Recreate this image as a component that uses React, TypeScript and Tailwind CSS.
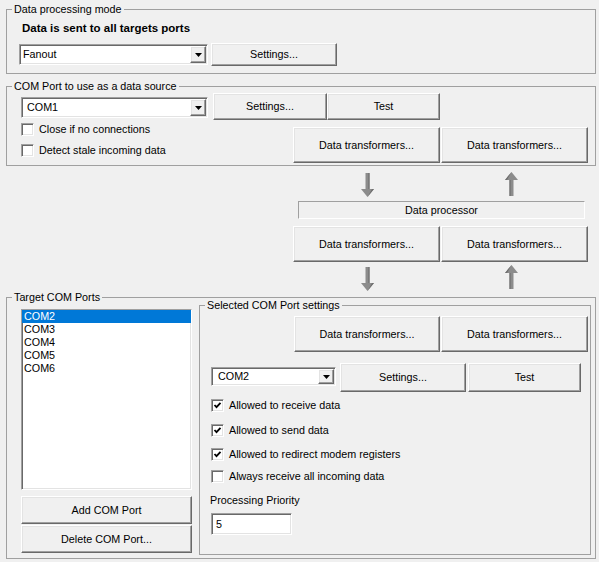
import React from 'react'

// classic win32 bevels
const raised =
  'border border-t-white border-l-white border-b-[#696969] border-r-[#696969] shadow-[inset_-1px_-1px_0_#a0a0a0,inset_1px_1px_0_#e3e3e3] bg-[#f0f0f0]'
const sunken =
  'border border-t-[#a0a0a0] border-l-[#a0a0a0] border-b-white border-r-white shadow-[inset_1px_1px_0_#696969,inset_-1px_-1px_0_#e3e3e3] bg-white'

function Button({ className, children }: { className: string; children: React.ReactNode }) {
  return (
    <div className={`${raised} flex items-center justify-center shrink-0 ${className}`}>
      {children}
    </div>
  )
}

function Combo({ value, className, textPad }: { value: string; className: string; textPad: string }) {
  return (
    <div className={`${sunken} flex items-stretch p-[1px] shrink-0 ${className}`}>
      <div className={`flex-1 flex items-center ${textPad}`}>{value}</div>
      <div className={`${raised} w-[16px] flex items-center justify-center`}>
        <svg width="7" height="4" viewBox="0 0 7 4">
          <polygon points="0,0 7,0 3.5,4" fill="#000" />
        </svg>
      </div>
    </div>
  )
}

function Check({ checked, label, className }: { checked?: boolean; label: string; className?: string }) {
  return (
    <div className={`flex items-center h-[13px] ${className ?? ''}`}>
      <div className={`${sunken} w-[13px] h-[13px] shrink-0 flex items-center justify-center`}>
        {checked && (
          <svg width="9" height="9" viewBox="0 0 9 9">
            <polyline points="1.5,4 3.5,6.2 7.5,1.8" fill="none" stroke="#000" strokeWidth="1.8" />
          </svg>
        )}
      </div>
      <span className="ml-[5px] whitespace-nowrap">{label}</span>
    </div>
  )
}

function Arrow({ up, className }: { up?: boolean; className?: string }) {
  return (
    <svg width="13" height="24" viewBox="0 0 13 24" className={className}>
      <g transform={up ? 'rotate(180 6.5 12)' : undefined}>
        <rect x="4.5" y="0" width="4" height="17" fill="#8c8c8c" />
        <rect x="7.5" y="0" width="1" height="17" fill="#696969" />
        <polygon points="0,16 13,16 6.5,24" fill="#8c8c8c" />
        <polygon points="6.5,24 13,16 11,16" fill="#6f6f6f" />
      </g>
    </svg>
  )
}

function Group({ title, className, children }: { title: string; className: string; children: React.ReactNode }) {
  return (
    <fieldset className={`border border-[#a0a0a0] min-w-0 ${className}`}>
      <legend className="ml-[5px] px-[2px] leading-[13px]">{title}</legend>
      {children}
    </fieldset>
  )
}

const ports = ['COM2', 'COM3', 'COM4', 'COM5', 'COM6']

export default function App() {
  return (
    <div className="w-[599px] h-[562px] overflow-hidden bg-[#f0f0f0] pl-[6px] pt-[3px] font-['Liberation_Sans',Arial,sans-serif] text-[10.75px] leading-[13px] text-black">
      {/* Data processing mode */}
      <Group title="Data processing mode" className="w-[590px] h-[71px]">
        <div className="ml-[15px] mt-[5px] font-bold text-[11.5px] leading-[14px]">
          Data is sent to all targets ports
        </div>
        <div className="flex items-start mt-[8px] ml-[12px]">
          <Combo value="Fanout" className="mt-[1px] w-[189px] h-[21px]" textPad="pl-[2px]" />
          <Button className="ml-[3px] w-[126px] h-[23px]">Settings...</Button>
        </div>
      </Group>

      {/* Source port */}
      <Group title="COM Port to use as a data source" className="mt-[6px] w-[590px] h-[86px]">
        <div className="flex items-start ml-[14px]">
          <Combo value="COM1" className="mt-[4px] w-[187px] h-[21px]" textPad="pl-[4px]" />
          <Button className="ml-[5px] w-[114px] h-[27px]">Settings...</Button>
          <Button className="w-[113px] h-[27px]">Test</Button>
        </div>
        <div className="flex items-start">
          <div className="ml-[14px] w-[272px] pt-[3px] flex flex-col gap-[8px]">
            <Check label="Close if no connections" />
            <Check label="Detect stale incoming data" />
          </div>
          <div className="flex mt-[7px]">
            <Button className="w-[147px] h-[36px]">Data transformers...</Button>
            <Button className="ml-[1px] w-[147px] h-[36px]">Data transformers...</Button>
          </div>
        </div>
      </Group>

      {/* Data flow */}
      <div className="ml-[287px] w-[295px]">
        <div className="flex items-start mt-[6px] h-[25px]">
          <Arrow className="ml-[68px] mt-[1px]" />
          <Arrow up className="ml-[131px]" />
        </div>
        <div className="mt-[4px] ml-[5px] w-[287px] h-[18px] border border-t-[#a0a0a0] border-l-[#a0a0a0] border-b-white border-r-white flex items-center justify-center">
          Data processor
        </div>
        <div className="flex mt-[7px]">
          <Button className="w-[147px] h-[36px]">Data transformers...</Button>
          <Button className="ml-[1px] w-[147px] h-[36px]">Data transformers...</Button>
        </div>
        <div className="flex items-start mt-[3px] h-[26px]">
          <Arrow className="ml-[68px] mt-[2px]" />
          <Arrow up className="ml-[131px]" />
        </div>
      </div>

      {/* Targets */}
      <Group title="Target COM Ports" className="w-[590px] h-[268px]">
        <div className="flex items-start">
          <div className="ml-[14px] w-[171px] mt-[5px] shrink-0">
            <div className={`${sunken} h-[181px]`}>
              {ports.map((p, i) => (
                <div
                  key={p}
                  className={`h-[13px] pl-[2px] flex items-center ${i === 0 ? 'bg-[#0078d7] text-white' : ''}`}
                >
                  {p}
                </div>
              ))}
            </div>
            <Button className="mt-[6px] w-[171px] h-[28px]">Add COM Port</Button>
            <Button className="mt-[1px] w-[171px] h-[28px]">Delete COM Port...</Button>
          </div>

          <Group title="Selected COM Port settings" className="ml-[7px] -mt-[5px] w-[392px] h-[256px] shrink-0">
            <div className="flex mt-[4px] ml-[94px]">
              <Button className="w-[146px] h-[36px]">Data transformers...</Button>
              <Button className="ml-[1px] w-[147px] h-[36px]">Data transformers...</Button>
            </div>
            <div className="flex items-start mt-[11px] ml-[11px]">
              <Combo value="COM2" className="mt-[4px] w-[125px] h-[19px]" textPad="pl-[5px]" />
              <Button className="ml-[4px] w-[126px] h-[29px]">Settings...</Button>
              <Button className="ml-[2px] w-[113px] h-[29px]">Test</Button>
            </div>
            <div className="ml-[11px] flex flex-col">
              <Check checked label="Allowed to receive data" className="mt-[7px]" />
              <Check checked label="Allowed to send data" className="mt-[12px]" />
              <Check checked label="Allowed to redirect modem registers" className="mt-[11px]" />
              <Check label="Always receive all incoming data" className="mt-[9px]" />
            </div>
            <div className="ml-[10px] mt-[11px]">Processing Priority</div>
            <div className={`${sunken} ml-[11px] mt-[6px] w-[81px] h-[22px] flex items-center pl-[4px]`}>5</div>
          </Group>
        </div>
      </Group>
    </div>
  )
}
